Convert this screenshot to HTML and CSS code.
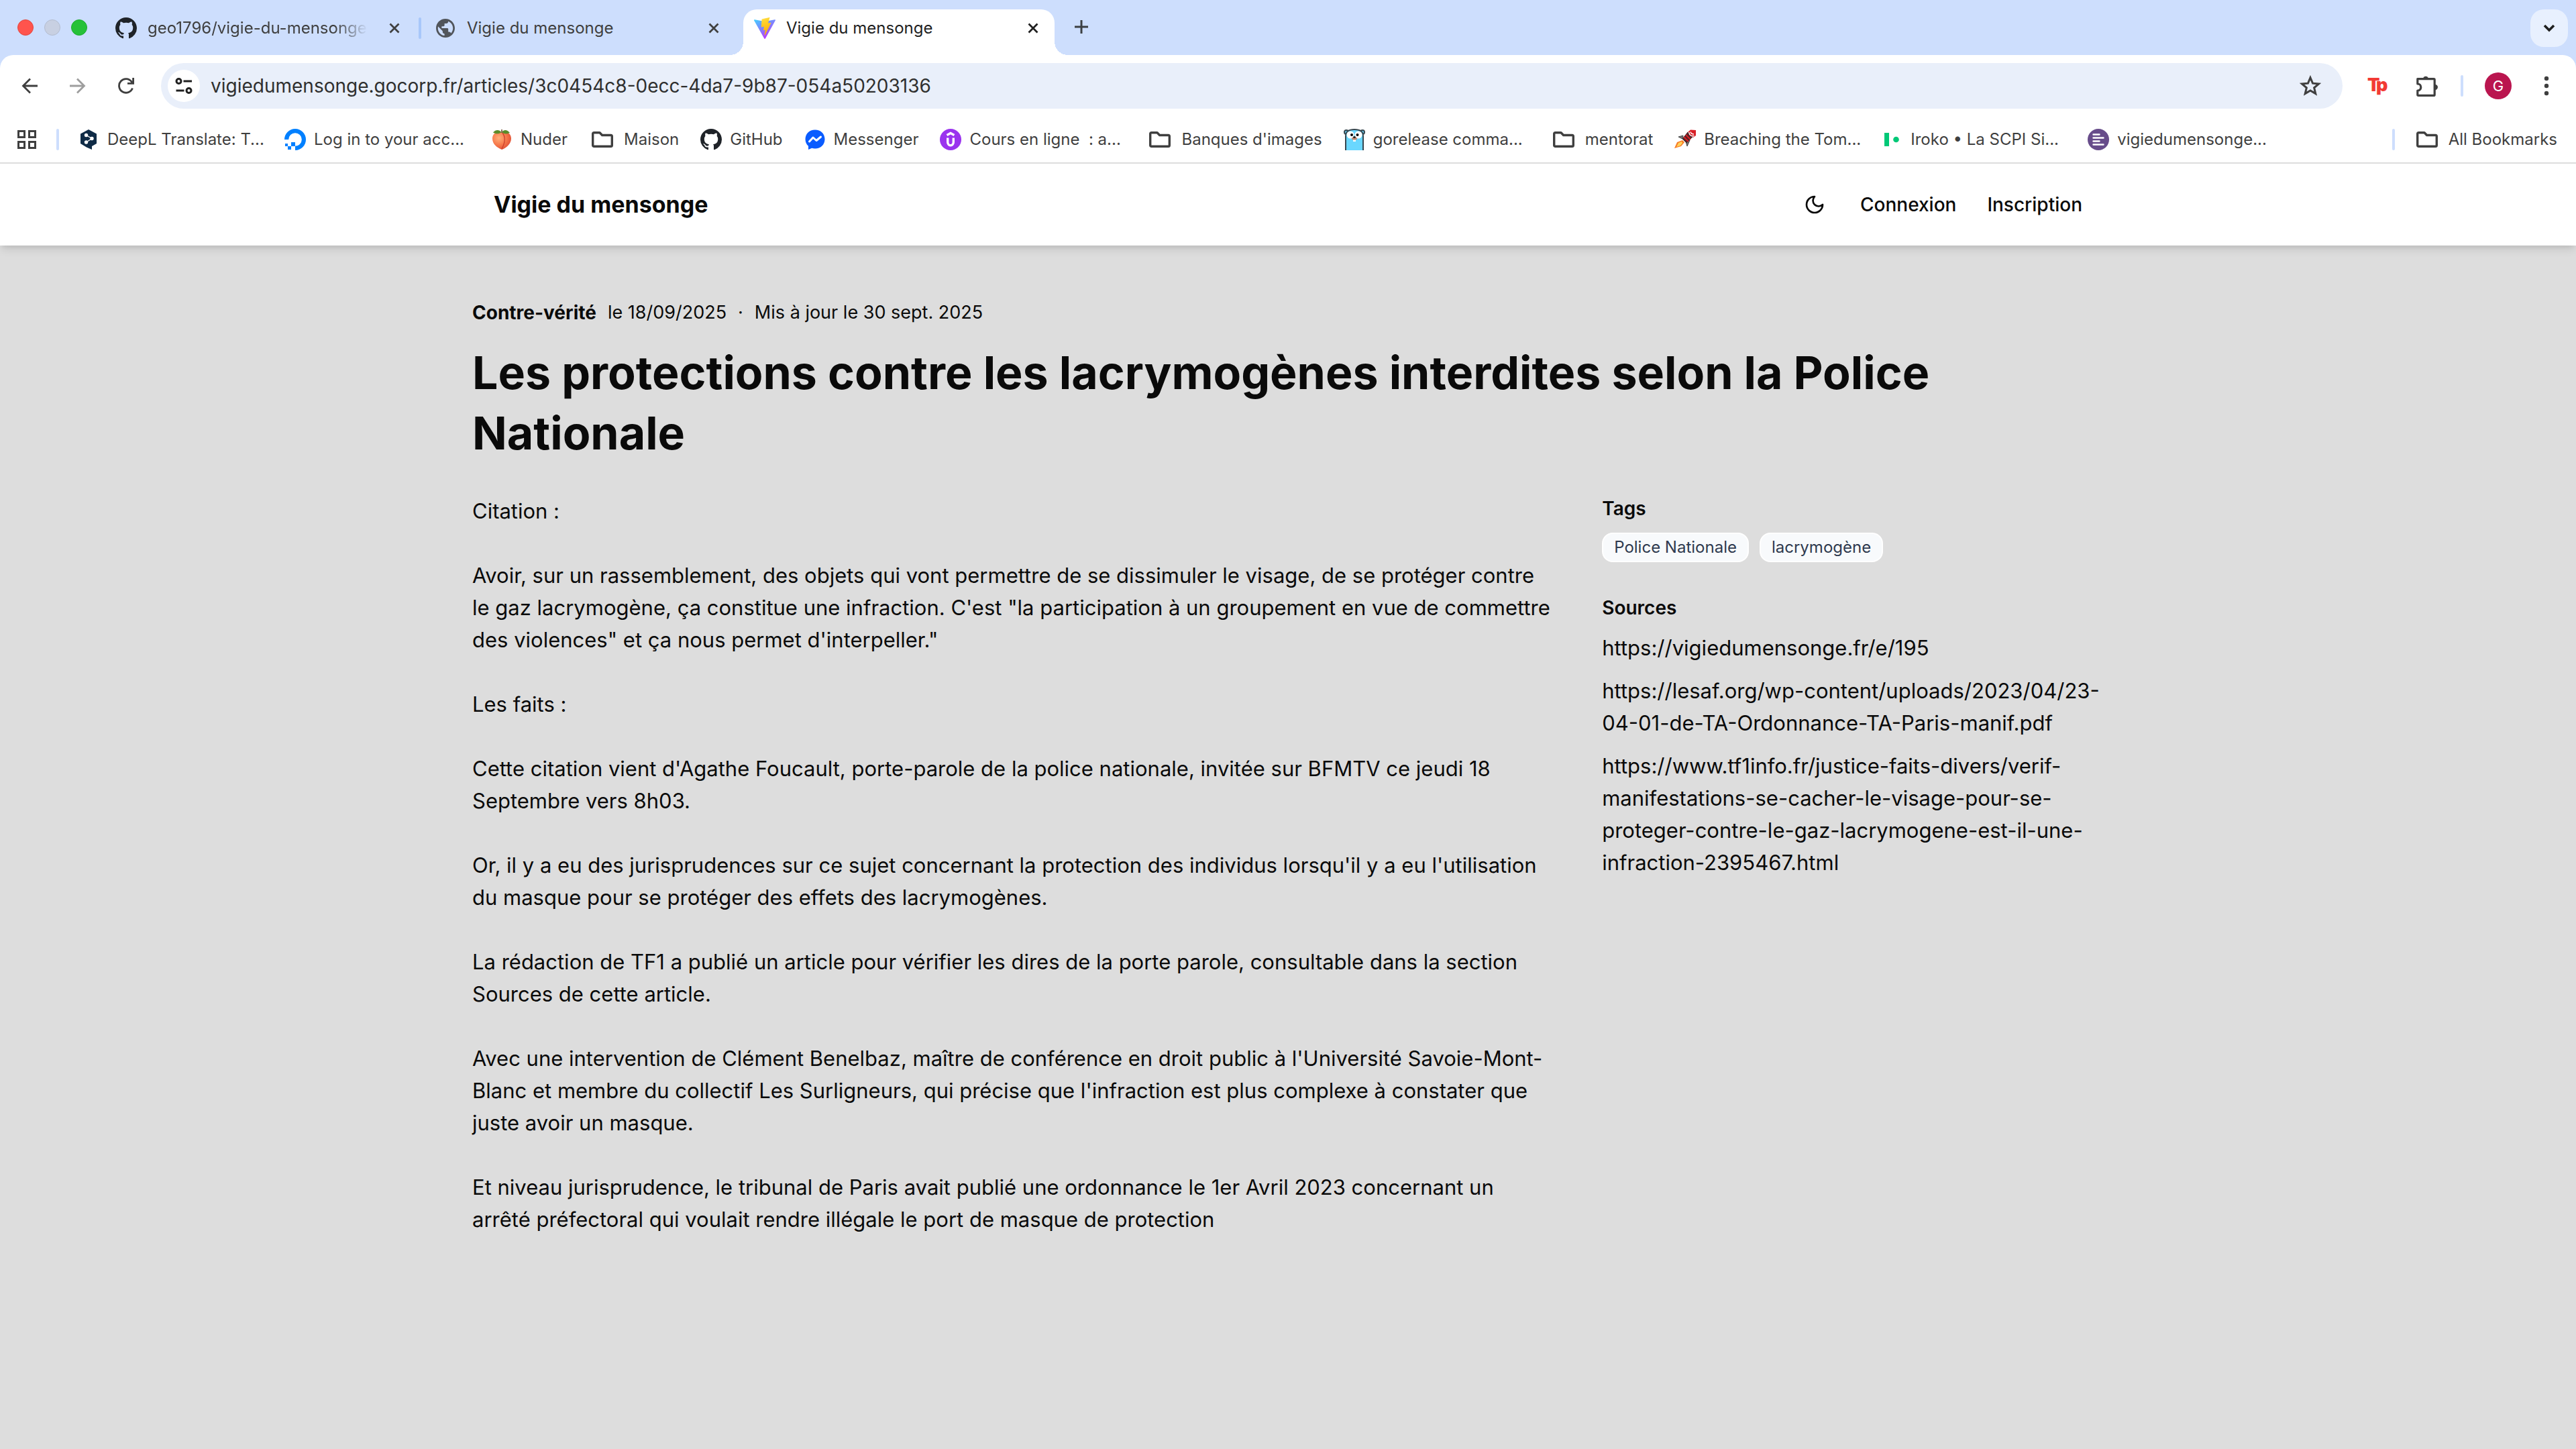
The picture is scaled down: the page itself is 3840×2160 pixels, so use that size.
FILE: index.html
```html
<!DOCTYPE html>
<html lang="fr">
<head>
<meta charset="utf-8">
<meta name="viewport" content="width=device-width, initial-scale=1">
<title>Vigie du mensonge</title>
<link rel="stylesheet" href="styles.css">
</head>
<body>
<svg class="sprite" aria-hidden="true">
  <symbol id="github" viewBox="0 0 16 16"><path fill="#1f2328" d="M8 0c4.42 0 8 3.58 8 8a8.013 8.013 0 0 1-5.45 7.59c-.4.08-.55-.17-.55-.38 0-.27.01-1.13.01-2.2 0-.75-.25-1.23-.54-1.48 1.78-.2 3.65-.88 3.65-3.95 0-.88-.31-1.59-.82-2.15.08-.2.36-1.02-.08-2.12 0 0-.67-.22-2.2.82-.64-.18-1.32-.27-2-.27-.68 0-1.36.09-2 .27-1.53-1.03-2.2-.82-2.2-.82-.44 1.1-.16 1.92-.08 2.12-.51.56-.82 1.28-.82 2.15 0 3.06 1.86 3.75 3.64 3.95-.23.2-.44.55-.51 1.07-.46.21-1.61.55-2.33-.66-.15-.24-.6-.83-1.23-.82-.67.01-.27.38.01.53.34.19.73.9.82 1.13.16.45.68 1.31 2.69.94 0 .67.01 1.3.01 1.49 0 .21-.15.45-.55.38A7.995 7.995 0 0 1 0 8c0-4.42 3.58-8 8-8Z"/></symbol>
  <symbol id="folder" viewBox="0 0 32 24"><path fill="none" stroke="#3f3f3f" stroke-width="3.4" stroke-linejoin="round" d="M3.5 1.8H12l3.6 3.7h12.9q1.8 0 1.8 1.8v13.2q0 1.8-1.8 1.8h-25q-1.8 0-1.8-1.8V3.6q0-1.8 1.8-1.8z"/></symbol>
  <symbol id="close" viewBox="0 0 16 16"><path fill="none" stroke="currentColor" stroke-width="2.8" d="M1.5 1.5l13 13M14.5 1.5l-13 13"/></symbol>
</svg>

<div class="browser">
  <div class="tabstrip">
    <div class="lights"><i class="light light-close"></i><i class="light light-min"></i><i class="light light-max"></i></div>
    <div class="tab">
      <svg class="favicon"><use href="#github"/></svg>
      <span class="tab-label tab-label-faded">geo1796/vigie-du-mensonge</span>
      <button class="tab-close" aria-label="Close tab"><svg><use href="#close"/></svg></button>
    </div>
    <i class="tab-sep"></i>
    <div class="tab">
      <svg class="favicon" viewBox="0 0 24 24"><path fill="#51555b" transform="translate(-.6 -.6) scale(1.05)" d="M12 2C6.48 2 2 6.48 2 12s4.48 10 10 10 10-4.48 10-10S17.52 2 12 2zm-1 17.93c-3.95-.49-7-3.85-7-7.93 0-.62.08-1.21.21-1.79L9 15v1c0 1.1.9 2 2 2v1.93zm6.9-2.54c-.26-.81-1-1.39-1.9-1.39h-1v-3c0-.55-.45-1-1-1H8v-2h2c.55 0 1-.45 1-1V7h2c1.1 0 2-.9 2-2v-.41c2.93 1.19 5 4.06 5 7.41 0 2.08-.8 3.97-2.1 5.39z"/></svg>
      <span class="tab-label">Vigie du mensonge</span>
      <button class="tab-close" aria-label="Close tab"><svg><use href="#close"/></svg></button>
    </div>
    <i class="tab-sep tab-sep-hidden"></i>
    <div class="tab tab-active">
      <svg class="favicon" viewBox="0 0 32 32">
        <defs>
          <linearGradient id="va" x1="0" y1="0" x2=".6" y2="1"><stop offset="0" stop-color="#41d1ff"/><stop offset="1" stop-color="#bd34fe"/></linearGradient>
          <linearGradient id="vb" x1=".4" y1="0" x2=".6" y2="1"><stop offset="0" stop-color="#ffea83"/><stop offset=".1" stop-color="#ffd835"/><stop offset="1" stop-color="#ffa800"/></linearGradient>
        </defs>
        <path fill="url(#va)" d="M31.8 4.6 16.9 31.4a.9.9 0 0 1-1.6 0L.1 4.6a.9.9 0 0 1 1-1.4L16 5.9l14.9-2.7a.9.9 0 0 1 .9 1.4z"/>
        <path fill="url(#vb)" d="m22.8 0-11 2.2a.5.5 0 0 0-.3.4l-.7 11.4a.4.4 0 0 0 .5.4l3.1-.7a.4.4 0 0 1 .5.5l-.9 4.5a.4.4 0 0 0 .5.5l1.9-.6a.4.4 0 0 1 .5.5l-1.4 7.1c-.1.4.5.7.7.3l.2-.2 8.9-17.9a.4.4 0 0 0-.5-.6l-3.1.6a.4.4 0 0 1-.5-.6l2.1-7.1a.4.4 0 0 0-.5-.7z"/>
      </svg>
      <span class="tab-label">Vigie du mensonge</span>
      <button class="tab-close" aria-label="Close tab"><svg><use href="#close"/></svg></button>
    </div>
    <button class="new-tab" aria-label="New tab"><svg viewBox="0 0 20 20"><path stroke="#3c4043" stroke-width="3" d="M10 0v20M0 10h20"/></svg></button>
    <button class="tab-search" aria-label="Search tabs"><svg viewBox="0 0 18 12"><path fill="none" stroke="#1f1f1f" stroke-width="3.6" d="M2 2l7 7 7-7"/></svg></button>
  </div>

  <div class="toolbar">
    <div class="nav-buttons">
      <button aria-label="Back"><svg viewBox="0 0 24 24"><path fill="none" stroke="#3f3f3f" stroke-width="2.8" d="M24 12H2.500M13 1.500 2.500 12 13 22.500"/></svg></button>
      <button aria-label="Forward"><svg viewBox="0 0 24 24"><path fill="none" stroke="#9e9e9e" stroke-width="2.800" d="M0 12h21.500M11 1.500 21.500 12 11 22.500"/></svg></button>
      <button aria-label="Reload"><svg viewBox="0 0 24 24"><path fill="none" stroke="#3f3f3f" stroke-width="2.800" d="M21.500 15.500A10.300 10.300 0 1 1 20 5.600L22 8M22.600 0v8.300H14"/></svg></button>
    </div>
    <div class="omnibox">
      <button class="site-info" aria-label="Site information"><svg viewBox="0 0 26 24"><g fill="none" stroke="#1f1f1f" stroke-width="3"><circle cx="5.500" cy="5" r="3.500"/><path d="M12.500 5H25M1.500 19h12"/><circle cx="20.500" cy="19" r="3.500"/></g></svg></button>
      <input class="url" type="text" aria-label="Address" value="vigiedumensonge.gocorp.fr/articles/3c0454c8-0ecc-4da7-9b87-054a50203136">
      <button class="star" aria-label="Bookmark this tab"><svg viewBox="0 0 30 30"><path fill="none" stroke="#3f3f3f" stroke-width="2.800" d="M15 3.500l3.300 7.900 8.500.7-6.500 5.500 2 8.300L15 21.500l-7.300 4.400 2-8.300-6.500-5.500 8.500-.7z"/></svg></button>
    </div>
    <div class="extensions">
      <button aria-label="Tp"><svg class="tp" viewBox="0 0 56 56"><text x="13" y="36">T</text><text x="26" y="36">p</text></svg></button>
      <button aria-label="Extensions"><svg class="puzzle" viewBox="0 0 32 32"><path fill="none" stroke="#3f3f3f" stroke-width="3.200" stroke-linejoin="round" d="M1.800 5.600H26q1.200 0 1.200 1.200V29.200q0 1.200-1.200 1.200H3q-1.200 0-1.200-1.200V23a5 5 0 0 0 0-10z"/><path fill="#3f3f3f" d="M10 5a4.200 4.500 0 0 1 8 0zM27.500 13.800a4.500 4.200 0 0 1 0 8.400z"/></svg></button>
    </div>
    <i class="sep"></i>
    <button class="avatar" aria-label="Profile">G</button>
    <button class="menu" aria-label="Menu"><svg viewBox="0 0 8 30"><g fill="#3f3f3f"><circle cx="4" cy="4" r="3.200"/><circle cx="4" cy="15" r="3.200"/><circle cx="4" cy="26" r="3.200"/></g></svg></button>
  </div>

  <div class="bookmarks">
    <button class="apps" aria-label="Apps"><svg viewBox="0 0 28 28"><g fill="none" stroke="#3f3f3f" stroke-width="3"><path d="M1.500 1.500h9v9h-9zM17.500 1.500h9v9h-9zM1.500 17.500h9v9h-9zM17.500 17.500h9v9h-9z"/></g></svg></button>
    <i class="sep"></i>
    <nav class="bookmark-list" aria-label="Bookmarks">
      <a class="bookmark bookmark-long" href="#"><svg viewBox="0 0 32 32"><path fill="#0f2b46" d="M16 1l12 6.500v14.500l-7 4V31l-8-3.500L4 22V7.500z"/><g fill="#fff" stroke="#fff" stroke-width="1.400"><circle cx="12.500" cy="9.500" r="2"/><circle cx="21" cy="14.500" r="2"/><circle cx="12.500" cy="20" r="2"/><path fill="none" d="M12.500 9.500l8.500 5-8.500 5.500"/></g></svg><span>DeepL Translate: T...</span></a>
      <a class="bookmark bookmark-long" href="#"><svg viewBox="0 0 32 32"><g fill="#0080ff"><path d="M0 16a16 16 0 1 1 16 16v-6.200A9.800 9.800 0 1 0 6.200 16z"/><path d="M10 20h6v6h-6zM5 26h5v5H5zM1 22h4v4H1z"/></g></svg><span>Log in to your acc...</span></a>
      <a class="bookmark" href="#"><svg viewBox="0 0 32 32"><defs><radialGradient id="pe" cx=".35" cy=".35" r=".8"><stop offset="0" stop-color="#ffb07a"/><stop offset=".5" stop-color="#f6784a"/><stop offset="1" stop-color="#d9432f"/></radialGradient></defs><path fill="url(#pe)" d="M16 31C9 28 2 23 2 14.500 2 8 7 4.500 12 4.500q3 0 4.500 1.500Q19 4.500 22 5c5 .5 8 4.500 8 9.500 0 8-7 14-14 16.500z"/><path fill="none" stroke="#c93e2b" stroke-width="1.300" d="M17 6q7 9-1 24"/><path fill="#5b8c2a" d="M15.500 5C12 1 7 1 3 5.500 7 8 12 8 15.500 5zM16 5c3-4 8-4 12 1-4 2-9 2-12-1z"/><path stroke="#6b4a2b" stroke-width="1.500" d="M16 6V1"/></svg><span>Nuder</span></a>
      <a class="bookmark folder" href="#"><svg><use href="#folder"/></svg><span>Maison</span></a>
      <a class="bookmark" href="#"><svg><use href="#github"/></svg><span>GitHub</span></a>
      <a class="bookmark" href="#"><svg viewBox="0 0 32 32"><path fill="#0a5cff" d="M16 1.500C7.500 1.500 1.500 7.600 1.500 15.500c0 4.200 1.700 7.700 4.500 10.200V31l5.200-2.200q2.300.7 4.800.7c8.500 0 14.500-6.100 14.500-14S24.500 1.500 16 1.500z"/><path fill="none" stroke="#fff" stroke-width="3" stroke-linejoin="round" stroke-linecap="round" d="M7.500 19l5.500-6 5 4.500 6.500-5.500"/></svg><span>Messenger</span></a>
      <a class="bookmark bookmark-long" href="#"><svg viewBox="0 0 32 32"><circle cx="16" cy="16" r="16" fill="#9a33ee"/><g fill="none" stroke="#fff" stroke-width="3.400"><path d="M10.500 9.500 16 6.500l5.500 3"/><path d="M11.700 13.500V20a4.300 4.800 0 0 0 8.600 0v-6.500"/></g></svg><span>Cours en ligne&nbsp; : a...</span></a>
      <a class="bookmark folder" href="#"><svg><use href="#folder"/></svg><span>Banques d'images</span></a>
      <a class="bookmark bookmark-long" href="#"><svg viewBox="0 0 32 32"><g stroke="#37474f" stroke-width="2"><circle cx="4" cy="5" r="3" fill="#6ad7fe"/><circle cx="28" cy="5" r="3" fill="#6ad7fe"/><path fill="#6ad7fe" d="M3 34V11Q3 1 16 1t13 10v23z"/></g><circle cx="10" cy="9" r="5.500" fill="#fff"/><circle cx="22" cy="9" r="5.500" fill="#fff"/><circle cx="12" cy="9" r="2"/><circle cx="20.500" cy="9" r="2"/><path fill="#fff" d="M14 15h4v4h-4z"/><ellipse cx="16" cy="14.500" rx="4" ry="2.200" fill="#c38c74"/><ellipse cx="16" cy="12.500" rx="2" ry="1.500" fill="#222"/></svg><span>gorelease comma...</span></a>
      <a class="bookmark folder" href="#"><svg><use href="#folder"/></svg><span>mentorat</span></a>
      <a class="bookmark bookmark-long" href="#"><svg viewBox="0 0 32 32"><path fill="#f77b25" d="M12 17 4 20 0 29l10-3 5-6z"/><path fill="#ffd25a" d="M11 19l-5 2-3 6 6-2 3-4z"/><path fill="#777" stroke="#444" d="M13 10l-7 2 6 3zM23 17l-4 9-2-7z"/><path fill="#5c2024" stroke="#333" d="M12 15 20 5l7 7-9 9z"/><path fill="#d81f26" d="M20 5l4-3.500L32 2v8l-4 3z"/><path fill="none" stroke="#d81f26" stroke-width="2" d="M14 12l7 7M17 9l7 7"/><path fill="none" stroke="#fff" stroke-width="1.400" d="M21.500 5c1 5 4 6.500 8 5.500M24 4.500q1 3.500 5 3.500"/></svg><span>Breaching the Tom...</span></a>
      <a class="bookmark bookmark-long" href="#"><svg viewBox="0 0 32 32"><path fill="#00c877" d="M5 6h7v20H5z"/><circle cx="22.500" cy="16" r="4.300" fill="#00c877"/></svg><span>Iroko • La SCPI Si...</span></a>
      <a class="bookmark bookmark-long" href="#"><svg viewBox="0 0 32 32"><circle cx="16" cy="16" r="16" fill="#674c8a"/><path stroke="#fff" stroke-width="2.400" stroke-linecap="round" d="M8.500 8.500h9M8.500 13.500h15M8.500 18.500h9M8.500 23.500h15"/></svg><span>vigiedumensonge...</span></a>
    </nav>
    <i class="sep"></i>
    <a class="bookmark folder" href="#"><svg><use href="#folder"/></svg><span>All Bookmarks</span></a>
  </div>
</div>

<header class="site-header">
  <div class="site-header-inner">
    <a class="brand" href="#">Vigie du mensonge</a>
    <nav class="site-nav">
      <button class="theme" aria-label="Thème sombre"><svg viewBox="0 0 24 24"><path fill="none" stroke="#0a0a0a" stroke-width="2" stroke-linecap="round" stroke-linejoin="round" d="M12 3a6 6 0 0 0 9 9 9 9 0 1 1-9-9Z"/></svg></button>
      <a href="#">Connexion</a>
      <a href="#">Inscription</a>
    </nav>
  </div>
</header>

<main class="page">
  <article class="article">
    <div class="meta"><strong>Contre-vérité</strong><span>le 18/09/2025</span><span>·</span><span>Mis à jour le 30 sept. 2025</span></div>
    <h1>Les protections contre les lacrymogènes interdites selon la Police Nationale</h1>
    <div class="columns">
      <div class="body">
        <p>Citation :</p>
        <p>Avoir, sur un rassemblement, des objets qui vont permettre de se dissimuler le visage, de se protéger contre<br>le gaz lacrymogène, ça constitue une infraction. C'est "la participation à un groupement en vue de commettre<br>des violences" et ça nous permet d'interpeller."</p>
        <p>Les faits :</p>
        <p>Cette citation vient d'Agathe Foucault, porte-parole de la police nationale, invitée sur BFMTV ce jeudi 18<br>Septembre vers 8h03.</p>
        <p>Or, il y a eu des jurisprudences sur ce sujet concernant la protection des individus lorsqu'il y a eu l'utilisation<br>du masque pour se protéger des effets des lacrymogènes.</p>
        <p>La rédaction de TF1 a publié un article pour vérifier les dires de la porte parole, consultable dans la section<br>Sources de cette article.</p>
        <p>Avec une intervention de Clément Benelbaz, maître de conférence en droit public à l'Université Savoie-Mont-<br>Blanc et membre du collectif Les Surligneurs, qui précise que l'infraction est plus complexe à constater que<br>juste avoir un masque.</p>
        <p>Et niveau jurisprudence, le tribunal de Paris avait publié une ordonnance le 1er Avril 2023 concernant un<br>arrêté préfectoral qui voulait rendre illégale le port de masque de protection</p>
      </div>
      <aside class="side">
        <section>
          <h2>Tags</h2>
          <div class="tags"><span class="tag">Police Nationale</span><span class="tag">lacrymogène</span></div>
        </section>
        <section>
          <h2>Sources</h2>
          <ul class="sources">
            <li><a href="#">https://vigiedumensonge.fr/e/195</a></li>
            <li><a href="#">https://lesaf.org/wp-content/uploads/2023/04/23-<wbr>04-01-de-TA-Ordonnance-TA-Paris-manif.pdf</a></li>
            <li><a href="#">https://www.tf1info.fr/justice-faits-divers/verif-<wbr>manifestations-se-cacher-le-visage-pour-se-<wbr>proteger-contre-le-gaz-lacrymogene-est-il-une-<wbr>infraction-2395467.html</a></li>
          </ul>
        </section>
      </aside>
    </div>
  </article>
</main>
</body>
</html>
```
FILE: styles.css
```css
* { box-sizing: border-box; }

body {
  margin: 0;
  min-height: 100vh;
  display: flex;
  flex-direction: column;
  font-family: Inter, "Liberation Sans", sans-serif;
  font-size: 24px;
  color: #0a0a0a;
  background: #dddddd;
}

button { border: 0; padding: 0; background: none; font: inherit; color: inherit; display: flex; align-items: center; justify-content: center; flex: none; }
a { color: inherit; text-decoration: none; }
svg { display: block; flex: none; }
.sprite { position: absolute; width: 0; height: 0; }

/* Browser chrome */
.browser { background: #cddefd; color: #3f3f3f; }

.tabstrip { display: flex; align-items: flex-end; height: 82px; padding: 14px 12px 0 26px; }
.lights { display: flex; gap: 16px; width: 130px; height: 68px; padding-top: 15px; }
.light { width: 24px; height: 24px; border-radius: 50%; border: 1px solid; }
.light-close { background: #ff544d; border-color: #e2463f; }
.light-min { background: #c8d0e2; border-color: #b3bccf; }
.light-max { background: #26c138; border-color: #1dac2e; }

.tab { position: relative; display: flex; align-items: center; width: 464px; height: 68px; padding: 0 24px 12px 16px; }
.favicon { width: 32px; height: 32px; margin-right: 16px; }
.tab-label { flex: 1; line-height: 32px; white-space: nowrap; overflow: hidden; margin-right: 32px; }
.tab-label-faded { -webkit-mask-image: linear-gradient(to right, #000 85%, transparent); mask-image: linear-gradient(to right, #000 85%, transparent); }
.tab-close { width: 16px; height: 16px; }
.tab-close svg { width: 16px; height: 16px; }
.tab-sep { width: 4px; height: 32px; margin: 0 4px 24px; border-radius: 2px; background: #a8c7fa; }
.tab-sep-hidden { background: none; }
.tab-active { background: #fff; border-radius: 20px 20px 0 0; color: #1f1f1f; }
.tab-active::before, .tab-active::after { content: ""; position: absolute; bottom: 0; width: 20px; height: 20px; }
.tab-active::before { left: -20px; background: radial-gradient(circle at 0 0, transparent 20px, #fff 20px); }
.tab-active::after { right: -20px; background: radial-gradient(circle at 100% 0, transparent 20px, #fff 20px); }
.new-tab { width: 56px; height: 56px; margin: 0 auto 14px 12px; }
.new-tab svg { width: 20px; height: 20px; }
.tab-search { width: 56px; height: 56px; margin-bottom: 12px; border-radius: 20px; background: #e8f0fe; }
.tab-search svg { width: 18px; height: 12px; }

.toolbar { display: flex; align-items: center; padding: 12px 16px; background: #fff; border-radius: 20px 20px 0 0; }
.nav-buttons { display: flex; gap: 16px; margin-right: 24px; }
.nav-buttons button { width: 56px; height: 56px; }
.nav-buttons svg { width: 24px; height: 24px; }
.omnibox { flex: 1; display: flex; align-items: center; height: 68px; padding: 0 32px 0 10px; border-radius: 34px; background: #e9effa; }
.site-info { width: 48px; height: 48px; border-radius: 50%; background: #fff; }
.site-info svg { width: 26px; height: 24px; }
.url { flex: 1; border: 0; padding: 0; margin-left: 16px; background: none; font: inherit; font-size: 28px; line-height: 40px; color: #2f2f2f; outline: 0; }
.star svg { width: 32px; height: 32px; }
.extensions { display: flex; gap: 18px; margin: 0 22px 0 24px; }
.extensions button { width: 56px; height: 56px; }
.puzzle { width: 32px; height: 32px; }
.tp { width: 56px; height: 56px; fill: #f23a34; font-size: 27px; font-weight: 900; overflow: visible; }
.sep { flex: none; width: 4px; height: 32px; border-radius: 2px; background: #cddefd; }
.avatar { width: 40px; height: 40px; margin: 0 24px 0 32px; border-radius: 50%; background: #ba154f; color: #fff; font-size: 22px; }
.menu { width: 56px; height: 56px; }
.menu svg { width: 8px; height: 30px; }

.bookmarks { display: flex; align-items: center; gap: 28px; height: 70px; padding: 0 28px 0 24px; background: #fff; border-bottom: 2px solid #dddddd; }
.apps { width: 32px; height: 32px; }
.apps svg { width: 28px; height: 28px; }
.bookmark-list { flex: 1; display: flex; gap: 32px; min-width: 0; }
.bookmark { flex: none; display: flex; align-items: center; gap: 12px; line-height: 32px; white-space: nowrap; }
.bookmark svg { width: 32px; height: 32px; }
.bookmark-long { width: 276px; }
.folder svg { width: 40px; height: 24px; }

/* Site header */
.site-header { position: relative; background: #fff; box-shadow: 0 8px 12px -2px rgba(0, 0, 0, .1), 0 4px 8px -4px rgba(0, 0, 0, .1); }
.site-header-inner { display: flex; align-items: center; justify-content: space-between; max-width: 2432px; min-height: 122px; margin: 0 auto; padding: 0 32px; }
.brand { font-size: 34px; font-weight: 700; line-height: 48px; }
.site-nav { display: flex; align-items: center; gap: 46px; font-size: 28px; font-weight: 500; line-height: 40px; }
.theme { width: 44px; height: 48px; }
.theme svg { width: 32px; height: 32px; }

/* Article */
.page { flex: 1; padding: 80px 64px; }
.article { max-width: 2432px; margin: 0 auto; }
.meta { display: flex; gap: 17px; font-size: 27px; line-height: 40px; }
.meta strong { font-size: 28px; font-weight: 700; }
h1 { margin: 24px 0 48px; font-size: 68px; font-weight: 700; line-height: 90px; }
.columns { display: grid; grid-template-columns: 13fr 6fr; gap: 64px; }
.body { font-size: 31px; line-height: 48px; }
.body p { margin: 0 0 48px; }
.side { display: flex; flex-direction: column; gap: 48px; }
h2 { margin: 0 0 16px; font-size: 28px; font-weight: 600; line-height: 40px; }
.tags { display: flex; gap: 16px; }
.tag { padding: 4px 16px; border: 2px solid #fff; border-radius: 16px; background: #f8fafc; color: #2f3a4f; font-size: 24px; line-height: 32px; }
.sources { display: flex; flex-direction: column; gap: 16px; margin: 0; padding: 0; list-style: none; font-size: 31px; line-height: 48px; }
```
